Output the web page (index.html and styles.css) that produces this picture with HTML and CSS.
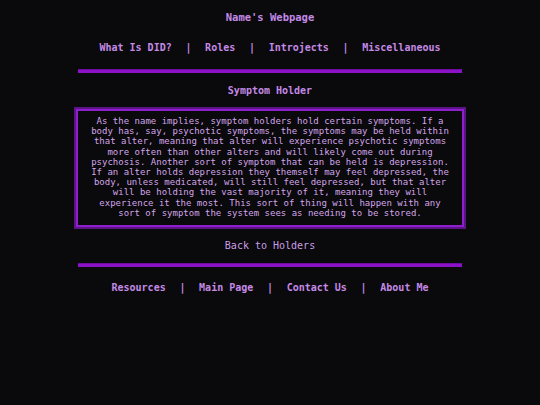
FILE: index.html
```html
<!DOCTYPE html>
<html>
<head>
<meta charset="utf-8">
<link rel="stylesheet" href="styles.css">
</head>
<body>
<div class="page">
  <h1 class="site-title">Name's Webpage</h1>
  <nav class="nav top-nav">
    <a>What Is DID?</a><span class="sep">|</span><a>Roles</a><span class="sep">|</span><a>Introjects</a><span class="sep">|</span><a>Miscellaneous</a>
  </nav>
  <div class="rule"></div>
  <h2 class="section-title">Symptom Holder</h2>
  <div class="box">
    <p class="box-text">As the name implies, symptom holders hold certain symptoms. If a body has, say, psychotic symptoms, the symptoms may be held within that alter, meaning that alter will experience psychotic symptoms more often than other alters and will likely come out during psychosis. Another sort of symptom that can be held is depression. If an alter holds depression they themself may feel depressed, the body, unless medicated, will still feel depressed, but that alter will be holding the vast majority of it, meaning they will experience it the most. This sort of thing will happen with any sort of symptom the system sees as needing to be stored.</p>
  </div>
  <a class="back">Back to Holders</a>
  <div class="rule"></div>
  <nav class="nav bottom-nav">
    <a>Resources</a><span class="sep">|</span><a>Main Page</a><span class="sep">|</span><a>Contact Us</a><span class="sep">|</span><a>About Me</a>
  </nav>
</div>
</body>
</html>
```

FILE: styles.css
```css
html, body {
  margin: 0;
  padding: 0;
  background: #0a090b;
}
body {
  font-family: "DejaVu Sans Mono", monospace;
  color: #c68ee6;
}
.page {
  width: 384px;
  margin: 0 auto;
  padding-top: 11px;
  display: flex;
  flex-direction: column;
  align-items: stretch;
}
.site-title {
  margin: 0;
  font-size: 10.5px;
  line-height: 12px;
  font-weight: bold;
  text-align: center;
  color: #c48ae6;
}
.nav {
  display: flex;
  justify-content: center;
  gap: 13.7px;
  font-size: 10px;
  line-height: 12px;
  font-weight: bold;
  color: #c48ae6;
  white-space: nowrap;
}
.top-nav {
  margin: 19px -40px 15px;
}
.bottom-nav {
  margin: 15px -40px 0;
}
.rule {
  height: 3px;
  border-top: 1px solid #6e0ca2;
  background: #8c12c8;
}
.section-title {
  margin: 12px 0 10px;
  font-size: 10px;
  line-height: 12px;
  font-weight: bold;
  text-align: center;
  color: #c48ae6;
}
.box {
  margin: 0 -4px;
  border: 2px solid #5a1484;
  box-shadow: inset 0 0 0 2px #8e1ece;
  padding: 7px 13px 9px;
}
.box-text {
  margin: 0;
  font-size: 9px;
  line-height: 10.2px;
  text-align: center;
  color: #d2a6ea;
}
.back {
  margin: 11px 0;
  font-size: 10px;
  line-height: 12px;
  text-align: center;
  color: #c89ee6;
}
```
